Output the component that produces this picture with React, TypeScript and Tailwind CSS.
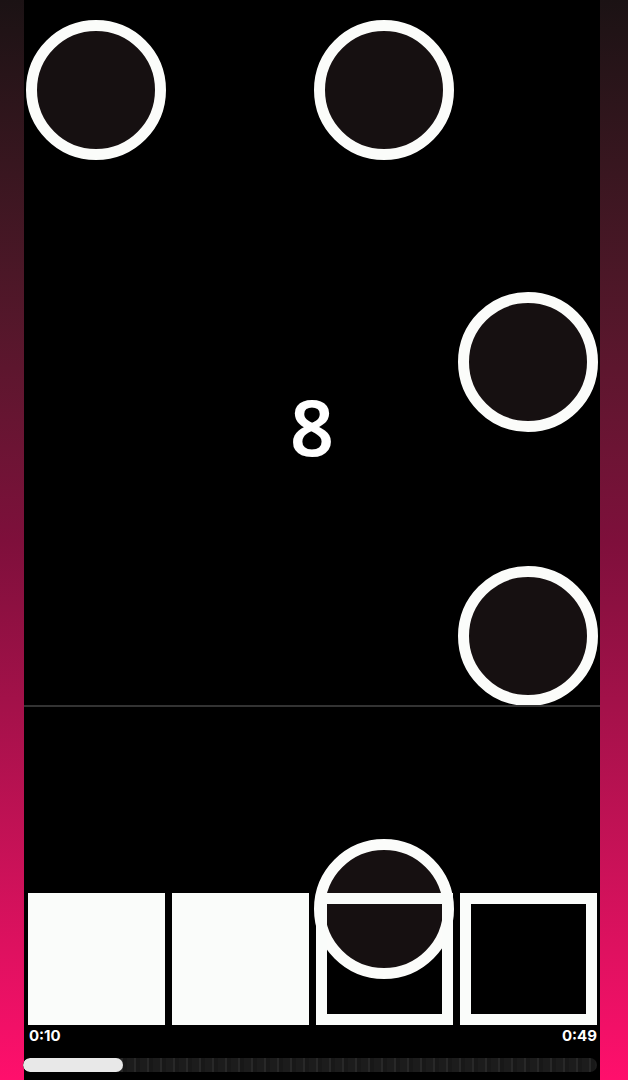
import React from "react";

const Note = ({ left, top }: { left: number; top: number }) => (
  <div
    className="absolute h-[140px] w-[140px] rounded-full border-[11px] border-[#fbfcfa] bg-[#161011]"
    style={{ left, top }}
  />
);

export default function App() {
  return (
    <div className="flex h-[1080px] w-[628px] overflow-hidden bg-black" style={{ fontFamily: '"Noto Sans", Inter, sans-serif' }}>
      <div className="h-full w-[24px] bg-gradient-to-b from-[#1b1214] via-[#7e0f3b] to-[#ff0f6c]" />
      <div className="relative flex h-full w-[576px] flex-col bg-black">
        {/* notes on the playfield */}
        <Note left={2} top={20} />
        <Note left={290} top={20} />
        <Note left={434} top={292} />
        <Note left={434} top={566} />
        <Note left={290} top={839} />

        <div className="relative flex h-[705px] justify-center pt-[388px]">
          <span className="text-[77px] font-semibold leading-none text-white" style={{ fontFamily: '"Noto Sans", sans-serif' }}>8</span>
        </div>
        <div className="relative z-10 h-[2px] w-full bg-[#333333]" />

        <div className="relative z-10 mt-[186px] flex h-[132px] gap-[7px] pl-[4px] pr-[3px]">
          <div className="h-full w-[137px] bg-[#fafcfa]" />
          <div className="h-full w-[137px] bg-[#fafcfa]" />
          <div className="h-full w-[137px] border-[11px] border-[#fafcfa]" />
          <div className="h-full w-[137px] border-[11px] border-[#fafcfa]" />
        </div>

        <div
          className="mt-[3px] flex justify-between pl-[5px] pr-[3px] text-[15px] font-bold leading-[15px] text-white"
          style={{ fontFamily: 'Inter, "Noto Sans", sans-serif' }}
        >
          <span>0:10</span>
          <span>0:49</span>
        </div>

        <div className="mt-[15px] h-[14px] w-[574px] -ml-[1px] overflow-hidden rounded-full bg-[repeating-linear-gradient(90deg,#1c1c1c_0px,#1c1c1c_7px,#282828_7px,#282828_9px,#181818_9px,#181818_13px)]">
          <div className="h-full w-[100px] rounded-full bg-[#e8e8e8]" />
        </div>
      </div>
      <div className="h-full w-[28px] bg-gradient-to-b from-[#1b1214] via-[#7e0f3b] to-[#ff0f6c]" />
    </div>
  );
}
